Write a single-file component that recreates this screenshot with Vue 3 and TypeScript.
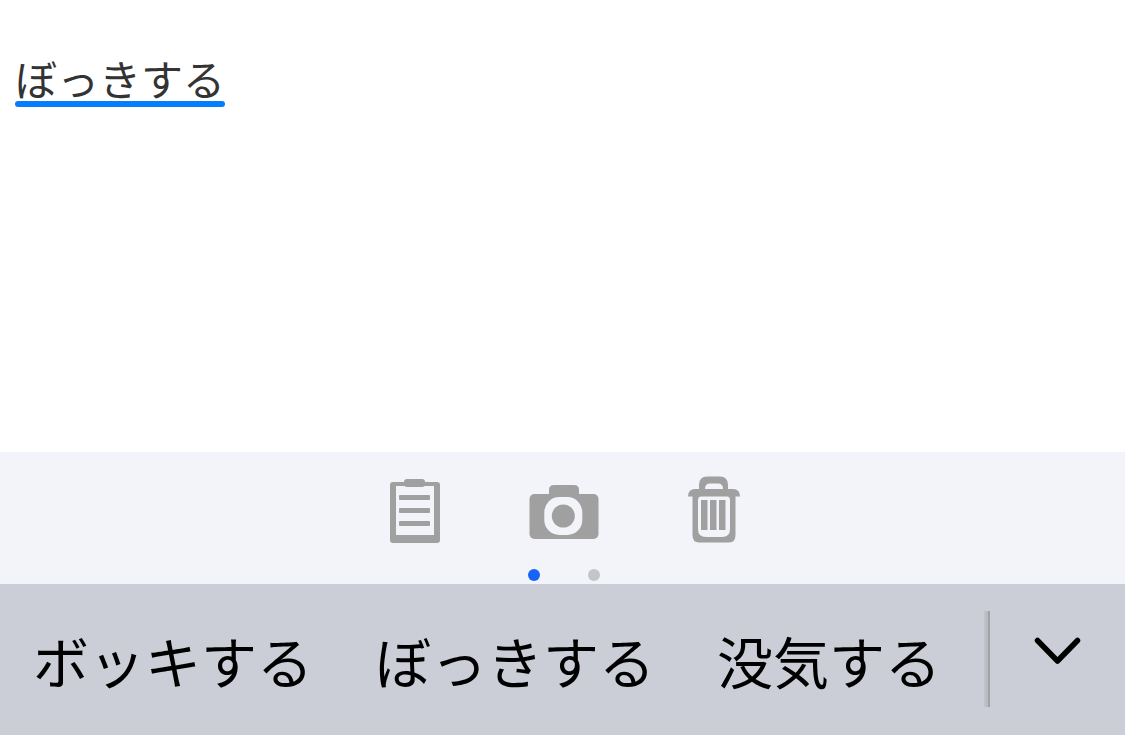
<script setup lang="ts">
import { ref } from 'vue'

const composing = ref('ぼっきする')
const candidates: string[] = ['ボッキする', 'ぼっきする', '没気する']
const pages: string[] = ['ページ 1', 'ページ 2']
const currentPage = ref(0)
</script>

<template>
  <main class="screen">
    <section class="editor">
      <div class="marked">
        <input v-model="composing" class="marked-input" type="text" aria-label="入力" />
      </div>
    </section>

    <section class="toolbar">
      <div class="tools">
        <button class="tool" type="button" aria-label="クリップボード">
          <svg viewBox="0 0 70 84" aria-hidden="true">
            <path
              fill-rule="evenodd"
              d="M14 14H58Q61 14 61 17V72Q61 75 58 75H14Q11 75 11 72V17Q11 14 14 14ZM17 18V67H55V18Z"
            />
            <rect x="25" y="11" width="21" height="8" rx="3" />
            <rect x="20" y="27" width="31" height="5" rx="1" />
            <rect x="20" y="40" width="31" height="5" rx="1" />
            <rect x="20" y="53" width="31" height="5" rx="1" />
          </svg>
        </button>
        <button class="tool" type="button" aria-label="カメラ">
          <svg viewBox="0 0 70 84" aria-hidden="true">
            <path d="M20 28V22Q20 17 25 17H45Q50 17 50 22V28Z" />
            <rect x="0.5" y="26" width="69" height="45" rx="5" />
            <rect class="cutout" x="15.3" y="29" width="38" height="38" rx="15" />
            <circle cx="34.3" cy="48" r="11.5" />
          </svg>
        </button>
        <button class="tool" type="button" aria-label="削除">
          <svg viewBox="0 0 70 84" aria-hidden="true">
            <path
              fill-rule="evenodd"
              d="M20 21V17Q20 8.500 28 8.500H41Q49 8.500 49 17V21H54Q61 21 61 28.500H56.500V67Q56.500 74.500 50 74.500H20Q13.500 74.500 13.500 67V28.500H9Q9 21 16 21ZM26 21H44Q44 15.500 39 15.500H31Q26 15.500 26 21ZM22 28.500Q19 28.500 19 32V61Q19 69 27 69H43Q51 69 51 61V32Q51 28.500 48 28.500Z"
            />
            <rect x="22" y="32" width="6.500" height="30" />
            <rect x="31" y="32" width="6.500" height="30" />
            <rect x="40" y="32" width="6.500" height="30" />
          </svg>
        </button>
      </div>
      <div class="dots">
        <button
          v-for="(page, i) in pages"
          :key="page"
          class="dot"
          :class="{ active: i === currentPage }"
          type="button"
          :aria-label="page"
          @click="currentPage = i"
        ></button>
      </div>
    </section>

    <section class="candidates">
      <div class="candidate-list">
        <button
          v-for="word in candidates"
          :key="word"
          class="candidate"
          type="button"
          @click="composing = word"
        >{{ word }}</button>
      </div>
      <div class="divider"></div>
      <button class="expand" type="button" aria-label="候補をすべて表示">
        <svg viewBox="0 0 48 28" aria-hidden="true">
          <path d="M3.500 3.500L23.500 24L43.500 3.500" />
        </svg>
      </button>
    </section>
  </main>
</template>

<style>
body {
  margin: 0;
}
</style>

<style scoped>
.screen {
  display: flex;
  flex-direction: column;
  min-height: 100vh;
  background: #ffffff;
  font-family: "Noto Sans CJK JP", "Noto Sans", sans-serif;
}

button {
  margin: 0;
  padding: 0;
  border: 0;
  background: none;
  color: inherit;
  font: inherit;
  cursor: pointer;
}

.editor {
  flex: 1;
  padding: 55px 15px 0;
}

.marked {
  display: flex;
  flex-direction: column;
  width: fit-content;
}

.marked::after {
  content: "";
  height: 6px;
  border-radius: 3px;
  background: #047dff;
}

.marked-input {
  box-sizing: border-box;
  width: 5em;
  height: 46px;
  padding: 0 0 2px;
  border: 0;
  outline: 0;
  background: transparent;
  color: #333333;
  font: inherit;
  font-size: 42px;
  line-height: 44px;
}

.toolbar {
  display: flex;
  flex-direction: column;
  align-items: center;
  padding: 16px 0 3px 3px;
  background: #f2f4f9;
}

.tools {
  display: flex;
  gap: 80px;
}

.tool {
  width: 70px;
  height: 84px;
}

.tool svg {
  display: block;
  width: 100%;
  fill: #a0a0a0;
}

.tool .cutout {
  fill: #f2f4f9;
}

.dots {
  display: flex;
  gap: 48px;
  margin-top: 17px;
}

.dot {
  width: 12px;
  height: 12px;
  border-radius: 50%;
  background: #c4c5c8;
}

.dot.active {
  background: #1764f4;
}

.candidates {
  box-sizing: border-box;
  display: flex;
  align-items: center;
  min-height: 151px;
  padding-bottom: 2px;
  background: #cbced7;
}

.candidate-list {
  display: flex;
  flex: 1;
  gap: 62px;
  padding: 2px 0 0 33px;
}

.candidate {
  color: #000000;
  font-size: 56px;
  line-height: 80px;
  white-space: nowrap;
}

.divider {
  box-sizing: border-box;
  width: 6px;
  height: 96px;
  border-right: 2px solid #a0a2a7;
  background: linear-gradient(to right, #c2c4cb, #b7b9bf);
}

.expand {
  display: flex;
  align-items: center;
  justify-content: center;
  width: 12%;
  height: 96px;
  padding-bottom: 16px;
}

.expand svg {
  width: 48px;
  height: 28px;
  fill: none;
  stroke: #000000;
  stroke-width: 5.500;
  stroke-linecap: round;
  stroke-linejoin: round;
}
</style>
